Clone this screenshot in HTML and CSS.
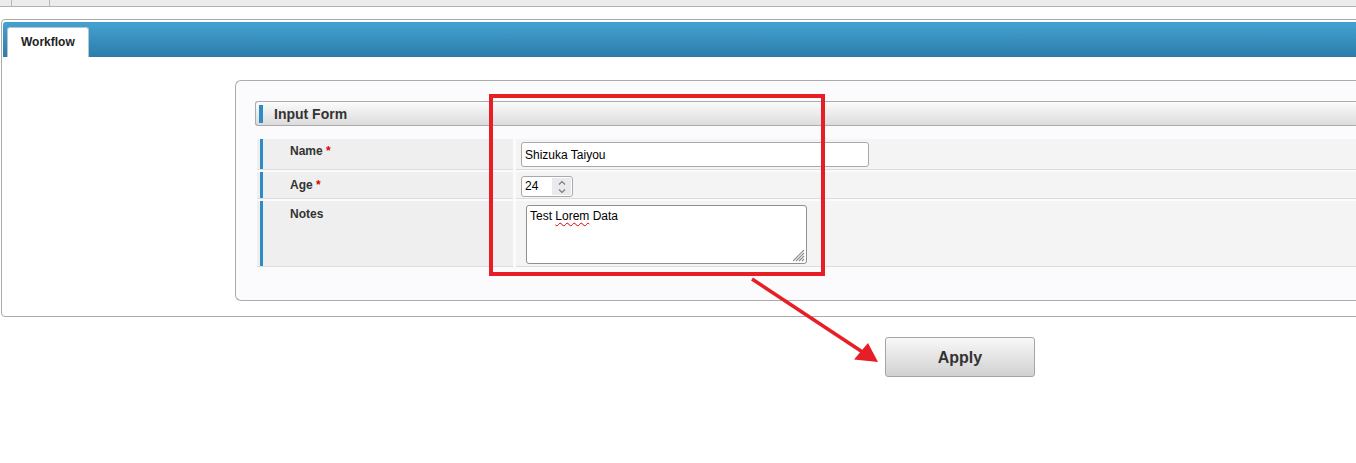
FILE: index.html
```html
<!DOCTYPE html>
<html lang="en">
<head>
<meta charset="utf-8">
<title>Workflow</title>
<link rel="stylesheet" href="styles.css">
</head>
<body>
<div class="topbar"><span class="tb-cell tb-a"></span><span class="tb-cell tb-b"></span></div>
<div class="page">
  <div class="window">
    <div class="tabbar"><div class="tab">Workflow</div></div>
    <div class="panel">
      <div class="section-head"><span class="marker"></span><span class="section-title">Input Form</span></div>
      <div class="form">
        <div class="lbl"><div class="lbl-in">Name <span class="req">*</span></div></div>
        <div class="val val-name"><input class="text" type="text" value="Shizuka Taiyou"></div>
        <div class="lbl"><div class="lbl-in lbl-age">Age <span class="req">*</span></div></div>
        <div class="val val-age">
          <div class="num"><span class="num-value">24</span><span class="spin"><svg width="8" height="14" viewBox="0 0 8 14"><path d="M1 4.5 L4 1.5 L7 4.5 M1 9.5 L4 12.5 L7 9.5" fill="none" stroke="#7a7a7a" stroke-width="1.1"/></svg></span></div>
        </div>
        <div class="lbl"><div class="lbl-in lbl-notes">Notes</div></div>
        <div class="val val-notes">
          <div class="textarea">Test <span class="misspelt">Lorem</span> Data<svg class="grip" width="12" height="12" viewBox="0 0 12 12"><path d="M11 3 L3 11 M11 6 L6 11 M11 9 L9 11 M11 0 L0 11" stroke="#8a8a8a" stroke-width="1.1"/></svg></div>
        </div>
      </div>
    </div>
  </div>
  <div class="actions"><button class="apply" type="button">Apply</button></div>
</div>
<div class="callout"></div>
<svg class="arrow" width="1356" height="463" viewBox="0 0 1356 463">
  <line x1="752" y1="279" x2="864" y2="353" stroke="#e61e25" stroke-width="3.5"/>
  <polygon points="878,362 854,359.5 868,343" fill="#e61e25"/>
</svg>
</body>
</html>
```
FILE: styles.css
```css
html, body {
  margin: 0;
  padding: 0;
  background: #ffffff;
  overflow: hidden;
}
body {
  font-family: "Liberation Sans", Arial, sans-serif;
  font-size: 12px;
  color: #333333;
  width: 1356px;
  height: 463px;
  position: relative;
}

.topbar {
  height: 6px;
  background: #ececec;
  border-bottom: 1px solid #b3b3b3;
  display: flex;
}
.tb-cell {
  display: block;
  height: 6px;
  border-right: 1px solid #b8b8b8;
}
.tb-a { width: 11px; }
.tb-b { width: 37px; }

.page {
  padding-top: 12px;
}

.window {
  margin-left: 1px;
  margin-right: -30px;
  border: 1px solid #ababab;
  border-radius: 4px;
  padding: 2px 0 0 1px;
}

.tabbar {
  height: 35px;
  box-sizing: border-box;
  background: linear-gradient(#43a2d1, #2c7caa);
  border-top: 1px solid #3b9acb;
  border-radius: 3px 3px 0 0;
  display: flex;
  align-items: flex-end;
  padding-left: 4px;
}
.tab {
  height: 30px;
  box-sizing: border-box;
  background: #ffffff;
  border: 1px solid #b9c3ca;
  border-bottom: none;
  border-radius: 3px 3px 0 0;
  padding: 7px 13px 0 13px;
  font-weight: bold;
  font-size: 12px;
  line-height: 14px;
  color: #222222;
}

.panel {
  margin: 23px 0 15px 232px;
  border: 1px solid #ababab;
  border-right: none;
  border-radius: 6px 0 0 6px;
  background: #fbfbfd;
  padding: 20px 0 33px 19px;
}

.section-head {
  height: 25px;
  box-sizing: border-box;
  border: 1px solid #ababab;
  border-right: none;
  border-radius: 3px 0 0 3px;
  background: linear-gradient(#fbfbfb, #dcdcdc);
  display: flex;
  align-items: center;
}
.marker {
  width: 4px;
  height: 18px;
  margin-left: 3px;
  background: #2d8cc4;
}
.section-title {
  margin-left: 11px;
  font-weight: bold;
  font-size: 14px;
  color: #333333;
}

.form {
  margin: 13px 0 0 2px;
  display: grid;
  grid-template-columns: 256px 1fr;
  grid-template-rows: 31px 27px 66px;
  column-gap: 3px;
  row-gap: 2px;
}
.lbl, .val {
  box-sizing: border-box;
  border-bottom: 1px solid #dcdcdc;
}
.lbl {
  background: #efefef;
  padding-left: 3px;
}
.lbl-in {
  height: 100%;
  box-sizing: border-box;
  border-left: 3px solid #2d8cc4;
  padding: 5px 0 0 27px;
  font-weight: bold;
  font-size: 12px;
  line-height: 14px;
  color: #333333;
}
.lbl-age { padding-top: 6px; }
.lbl-notes { padding-top: 6px; }
.req { color: #e00000; }

.val {
  background: #f4f4f4;
  padding-left: 5px;
}
.val-name { padding-top: 3px; }
.val-age { padding-top: 4px; }
.val-notes { padding-top: 4px; padding-left: 10px; }

.text {
  display: block;
  width: 348px;
  height: 25px;
  box-sizing: border-box;
  border: 1px solid #a9a9a9;
  border-radius: 3px;
  padding: 0 3px;
  margin: 0;
  font-family: "Liberation Sans", Arial, sans-serif;
  font-size: 12px;
  color: #000000;
  background: #ffffff;
  outline: none;
}

.num {
  width: 52px;
  height: 21px;
  box-sizing: border-box;
  border: 1px solid #a9a9a9;
  border-radius: 3px;
  background: #ffffff;
  display: flex;
  align-items: stretch;
  overflow: hidden;
}
.num-value {
  padding-left: 3px;
  font-size: 12px;
  line-height: 19px;
  color: #000000;
}
.spin {
  margin-left: auto;
  width: 19px;
  margin-top: 1px;
  margin-bottom: 1px;
  margin-right: 1px;
  background: #e9e9ee;
  display: flex;
  align-items: center;
  justify-content: center;
}

.textarea {
  position: relative;
  width: 281px;
  height: 59px;
  box-sizing: border-box;
  border: 1px solid #8f8f8f;
  border-radius: 3px;
  background: #ffffff;
  padding: 3px;
  font-size: 12px;
  line-height: 14px;
  color: #000000;
}
.misspelt {
  text-decoration: underline wavy #e00000;
  text-decoration-thickness: 1px;
  text-underline-offset: 2px;
}
.grip {
  position: absolute;
  right: 1px;
  bottom: 1px;
}

.actions {
  margin-top: 20px;
  padding-left: 885px;
}
.apply {
  width: 150px;
  height: 40px;
  border: 1px solid #a5a5a5;
  border-radius: 3px;
  background: linear-gradient(#f8f8f8, #d1d1d1);
  font-family: "Liberation Sans", Arial, sans-serif;
  font-weight: bold;
  font-size: 16px;
  color: #333333;
  padding: 1px 0 0 0;
  margin: 0;
}

.callout {
  position: absolute;
  left: 489px;
  top: 94px;
  width: 336px;
  height: 182px;
  box-sizing: border-box;
  border: 4px solid #e61e25;
}
.arrow {
  position: absolute;
  left: 0;
  top: 0;
  pointer-events: none;
}
```
